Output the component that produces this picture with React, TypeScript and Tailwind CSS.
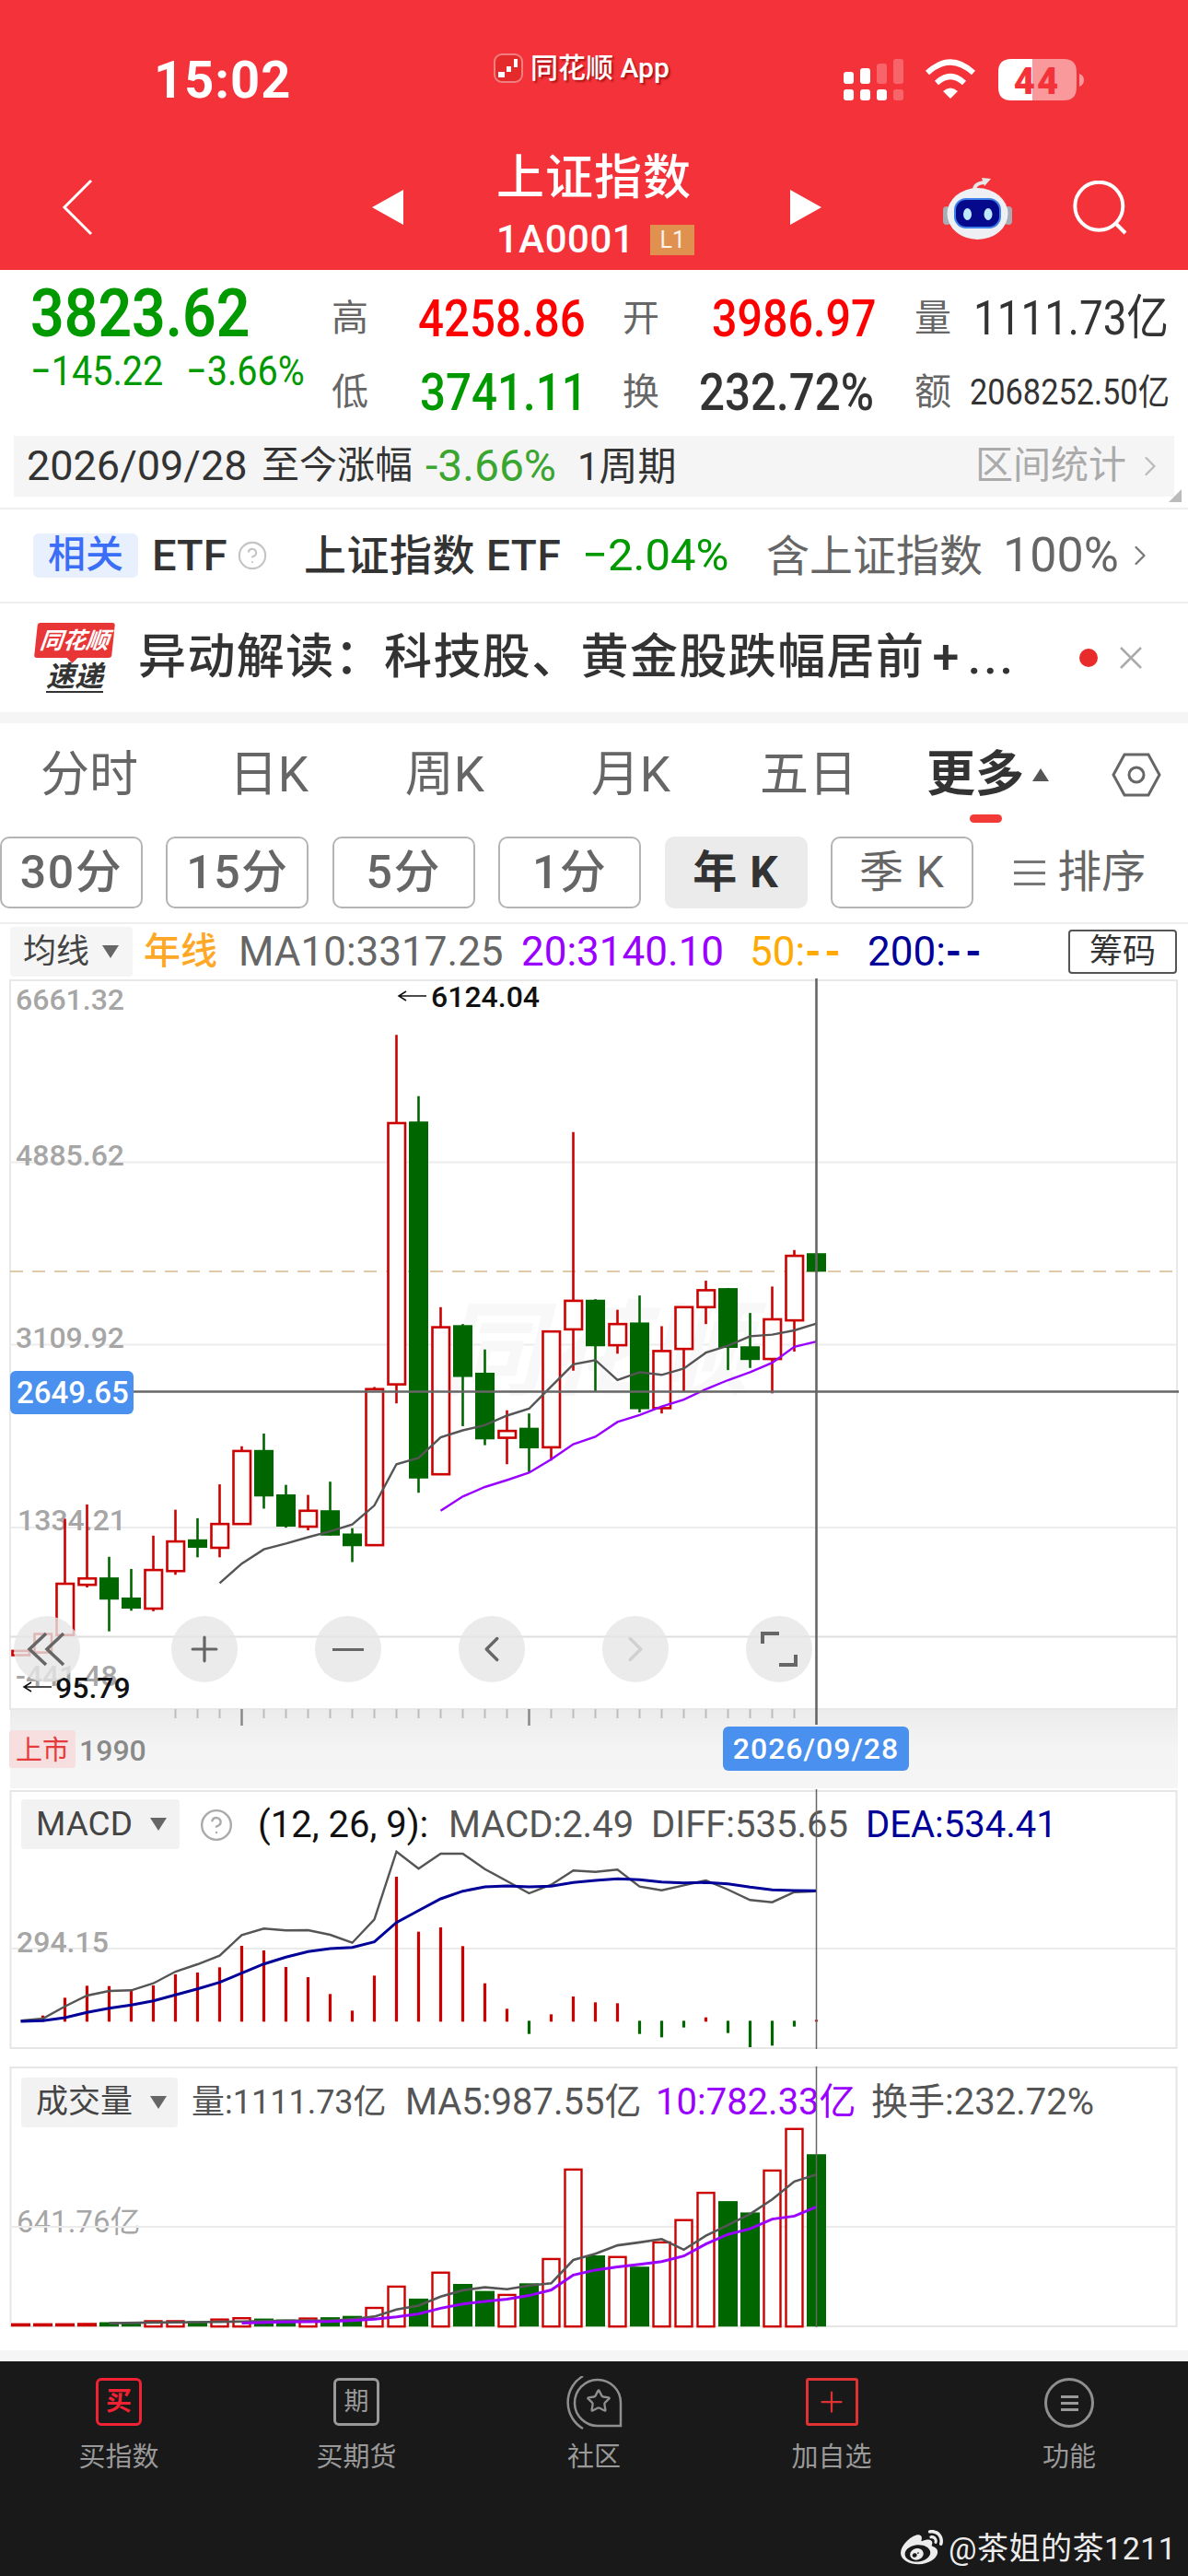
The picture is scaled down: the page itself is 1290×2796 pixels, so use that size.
import React from 'react';
import { ChevronLeft, ChevronRight, Plus, Star, CircleHelp } from 'lucide-react';
import { FaWeibo } from 'react-icons/fa';

// candle centres sit 24px apart
const cx = (i: number) => 22.5 + 24 * i;

// measured off the reference: [up, high, top, bottom, low]
type Candle = [boolean, number, number, number, number];
const candles: Candle[] = [
  [true, 1275, 1275, 1283, 1283],
  [true, 1243, 1243, 1278, 1278],
  [true, 1025, 1148, 1245, 1245],
  [true, 998, 1138, 1150, 1155],
  [false, 1097, 1136, 1178, 1238],
  [false, 1120, 1174, 1195, 1199],
  [true, 1057, 1122, 1195, 1200],
  [true, 1008, 1068, 1124, 1131],
  [false, 1024, 1064, 1080, 1098],
  [true, 960, 1035, 1080, 1098],
  [true, 888, 897, 1035, 1035],
  [false, 864, 895, 983, 1006],
  [false, 961, 979, 1040, 1042],
  [true, 980, 1010, 1040, 1047],
  [false, 955, 1009, 1057, 1057],
  [false, 1043, 1053, 1077, 1107],
  [true, 776, 780, 1075, 1075],
  [true, 110, 277, 771, 807],
  [false, 226, 274, 949, 976],
  [true, 625, 663, 941, 941],
  [false, 657, 659, 757, 850],
  [false, 705, 749, 875, 886],
  [true, 820, 859, 872, 922],
  [false, 826, 853, 892, 937],
  [true, 671, 671, 890, 915],
  [true, 294, 613, 667, 745],
  [false, 610, 611, 699, 785],
  [true, 630, 657, 697, 713],
  [false, 603, 654, 818, 824],
  [true, 661, 708, 816, 826],
  [true, 625, 625, 704, 785],
  [true, 575, 593, 625, 657],
  [false, 589, 589, 702, 744],
  [false, 636, 699, 725, 740],
  [true, 586, 648, 723, 788],
  [true, 517, 528, 650, 709],
  [false, 523, 523, 558, 558],
];
const my = (z: number) => 1060 + z / 1.742;

const maGray: [number, number][] = [
  [9, 1147], [10, 1110], [11, 1083], [12, 1072], [13, 1060], [14, 1049], [15, 1036], [16, 1000], [17, 922], [18, 910],
  [19, 871], [20, 858], [21, 848], [22, 830], [23, 817], [24, 775], [25, 733], [26, 725], [27, 763], [28, 748],
  [29, 753], [30, 741], [31, 711], [32, 698], [33, 680], [34, 677], [35, 669], [36, 656],
];
const maPurple: [number, number][] = [
  [19, 1010], [20, 983], [21, 965], [22, 952], [23, 938], [24, 913], [25, 884], [26, 870], [27, 842], [28, 829],
  [29, 813], [30, 800], [31, 780], [32, 763], [33, 748], [34, 730], [35, 700], [36, 690],
];

const diff = [817, 810, 770, 735, 720, 718, 695, 657, 633, 605, 538, 517, 523, 522, 537, 563, 487, 266, 322, 273, 273, 323, 362, 402, 374, 328, 332, 325, 380, 392, 376, 360, 390, 424, 431, 398, 395];
const dea = [819, 817, 807, 790, 776, 766, 752, 733, 713, 692, 662, 632, 610, 592, 582, 578, 560, 497, 458, 420, 395, 381, 378, 381, 379, 367, 360, 355, 358, 365, 368, 367, 371, 382, 391, 393, 394];
const macdBars = [820, 800, 742, 703, 704, 718, 702, 666, 660, 643, 573, 588, 642, 675, 730, 784, 670, 348, 527, 513, 574, 695, 778, 860, 796, 738, 757, 760, 860, 871, 839, 806, 857, 903, 898, 836, 814];
const macdY = (z: number) => 1920 + z / 3;

const volTops = [805, 805, 805, 804, 802, 802, 799, 799, 799, 794, 790, 791, 794, 791, 787, 783, 759, 695, 731, 653, 687, 708, 720, 685, 612, 343, 601, 606, 635, 562, 495, 413, 438, 472, 346, 221, 297];
const volUp = [1, 1, 1, 1, 0, 0, 1, 1, 0, 1, 1, 0, 0, 1, 0, 0, 1, 1, 0, 1, 0, 0, 1, 0, 1, 1, 0, 1, 0, 1, 1, 1, 0, 0, 1, 1, 0];
const volGray: [number, number][] = [
  [4, 805], [6, 803], [8, 802], [10, 800], [12, 797], [14, 797], [15, 793], [16, 785], [17, 764], [18, 752], [19, 725], [20, 706], [21, 697],
  [22, 703], [23, 692], [24, 685], [25, 615], [26, 596], [27, 571], [28, 562], [29, 552], [30, 584], [31, 542], [32, 510], [33, 477], [34, 433], [35, 379], [36, 358],
];
const volPurple: [number, number][] = [
  [10, 805], [12, 801], [14, 800], [15, 797], [16, 793], [17, 786], [18, 777], [19, 760], [20, 747], [21, 740], [22, 733], [23, 722], [24, 705],
  [25, 660], [26, 645], [27, 636], [28, 628], [29, 620], [30, 603], [31, 567], [32, 538], [33, 521], [34, 492], [35, 483], [36, 455],
];
const volY = (z: number) => 2230 + z / 2.77;

const line = (pts: [number, number][], toY: (z: number) => number) =>
  pts.map(([i, z]) => `${cx(i)},${toY(z).toFixed(1)}`).join(' ');

function StatusIcons() {
  return (
    <svg width="262" height="50" viewBox="916 62 262 50" className="block">
      {/* signal */}
      <g fill="#fff">
        <rect x="916" y="78" width="11" height="13" rx="3" />
        <rect x="934" y="74" width="11" height="17" rx="3" />
        <rect x="952" y="69" width="11" height="22" rx="3" opacity="0.25" />
        <rect x="970" y="64" width="11" height="27" rx="3" opacity="0.25" />
        <rect x="916" y="97" width="11" height="12" rx="3" />
        <rect x="934" y="97" width="11" height="12" rx="3" />
        <rect x="952" y="97" width="11" height="12" rx="3" />
        <rect x="970" y="97" width="11" height="12" rx="3" opacity="0.25" />
      </g>
      {/* wifi */}
      <path d="M1007 79 Q1032 56 1057 79" fill="none" stroke="#fff" strokeWidth="6" />
      <path d="M1017 90 Q1032 76 1047 90" fill="none" stroke="#fff" strokeWidth="6" />
      <path d="M1024 99 Q1032 92 1040 99 L1032 107 Z" fill="#fff" />
      {/* battery */}
      <path d="M1121 64 H1098 Q1084 64 1084 78 V95 Q1084 109 1098 109 H1121 Z" fill="#fff" />
      <path d="M1121 64 H1155 Q1169 64 1169 78 V95 Q1169 109 1155 109 H1121 Z" fill="#fff" opacity="0.5" />
      <path d="M1172 80 Q1177 82 1177 87 Q1177 92 1172 94 Z" fill="#fff" opacity="0.5" />
      <text x="1126" y="102" textAnchor="middle" fontFamily="Roboto" fontWeight="900" fontSize="40" letterSpacing="2" fill="#f43239">
        44
      </text>
    </svg>
  );
}

function Robot() {
  return (
    <svg width="76" height="70" viewBox="1024 193 76 70" className="block">
      <path d="M1058 208 Q1057 199 1069 198" fill="none" stroke="#e8e8e8" strokeWidth="4" />
      <path d="M1066 193 L1076 194 L1069 202 Z" fill="#e8e8e8" />
      <rect x="1024" y="224" width="8" height="20" rx="4" fill="#a9adb3" />
      <rect x="1091" y="224" width="8" height="20" rx="4" fill="#a9adb3" />
      <ellipse cx="1061.5" cy="232" rx="33" ry="28" fill="#eef0f3" />
      <rect x="1036" y="215" width="51" height="33" rx="13" fill="#3f7fe8" />
      <rect x="1038" y="217" width="47" height="29" rx="11" fill="#050a8c" />
      <ellipse cx="1050.5" cy="232.5" rx="4.5" ry="6.5" fill="#bfe9ff" />
      <ellipse cx="1073" cy="232.5" rx="4.5" ry="6.5" fill="#bfe9ff" />
    </svg>
  );
}

function MainChart() {
  return (
    <svg viewBox="0 1062 1290 880" className="block h-[880px] w-[1290px]">
      <defs>
        <linearGradient id="axisBand" x1="0" y1="0" x2="0" y2="1">
          <stop offset="0" stopColor="#ececec" />
          <stop offset="0.5" stopColor="#f4f4f4" />
          <stop offset="1" stopColor="#f5f5f5" />
        </linearGradient>
      </defs>
      <rect x="11" y="1855" width="1268" height="86" fill="url(#axisBand)" />
      <rect x="11" y="1064" width="1267" height="791" fill="#fff" stroke="#e8e8e8" strokeWidth="2" />
      {[1261.5, 1459.5, 1658].map((y) => (
        <line key={y} x1="11" x2="1278" y1={y} y2={y} stroke="#ececec" strokeWidth="2" />
      ))}
      <line x1="11" x2="1278" y1="1776.5" y2="1776.5" stroke="#dedede" strokeWidth="2" />
      <text x="478" y="1505" fontFamily="Roboto, 'Noto Sans CJK SC'" fontStyle="italic" fontWeight="700" fontSize="112" fill="#f8f8f8">
        同花顺
      </text>
      <line x1="11" x2="1278" y1="1380" y2="1380" stroke="#d6b98a" strokeWidth="1.5" strokeDasharray="14 10" />

      {/* axis labels */}
      <g fontFamily="Roboto" fontSize="32" fontWeight="500" fill="#a6a6a6">
        <text x="17" y="1096">6661.32</text>
        <text x="17" y="1265">4885.62</text>
        <text x="17" y="1463">3109.92</text>
        <text x="19" y="1661">1334.21</text>
        <text x="17" y="1830">-441.48</text>
      </g>

      {/* candles */}
      {candles.map(([up, high, top, bottom, low], i) => {
        const x = cx(i);
        const color = up ? '#cc0000' : '#006600';
        return (
          <g key={i}>
            <line x1={x} x2={x} y1={my(high)} y2={my(low)} stroke={color} strokeWidth="2.6" />
            {up ? (
              <rect x={x - 9} y={my(top)} width="18.5" height={Math.max(my(bottom) - my(top), 2)} fill="#fff" stroke={color} strokeWidth="2.6" />
            ) : (
              <rect x={x - 10.5} y={my(top)} width="21" height={my(bottom) - my(top)} fill={color} />
            )}
          </g>
        );
      })}
      <polyline points={line(maGray, my)} fill="none" stroke="#555" strokeWidth="2.4" />
      <polyline points={line(maPurple, my)} fill="none" stroke="#9900ff" strokeWidth="2.4" />

      {/* crosshair */}
      <line x1="11" x2="1280" y1="1510.5" y2="1510.5" stroke="#666" strokeWidth="2.4" />
      <line x1="886.5" x2="886.5" y1="1062" y2="1872" stroke="#666" strokeWidth="2.6" />

      {/* high / low callouts */}
      <g fontFamily="Roboto" fontSize="32" fontWeight="500" fill="#111">
        <text x="468" y="1093">6124.04</text>
        <text x="60" y="1843">95.79</text>
      </g>
      <path d="M463 1081 H433 M441 1076 L433 1081 L441 1086" fill="none" stroke="#111" strokeWidth="1.5" />
      <path d="M56 1831 H26 M34 1826 L26 1831 L34 1836" fill="none" stroke="#111" strokeWidth="1.5" />

      {/* price tag */}
      <rect x="11" y="1488" width="134" height="47" rx="6" fill="#4a90ee" />
      <text x="18" y="1523" fontFamily="Roboto" fontSize="33" fontWeight="500" fill="#fff">2649.65</text>

      {/* time axis */}
      {candles.map((_, i) => {
        if (i < 7 || i === 36) return null;
        const big = i === 10 || i === 23;
        return <line key={i} x1={cx(i)} x2={cx(i)} y1="1855" y2={big ? 1873 : 1865} stroke={big ? '#888' : '#bdbdbd'} strokeWidth={big ? 2.5 : 2} />;
      })}
      <rect x="10" y="1878" width="72" height="41" rx="3" fill="#f8dfdf" />
      <text x="17" y="1910" fontFamily="'Noto Sans CJK SC'" fontSize="29" fill="#e63b3b">上市</text>
      <text x="86" y="1911" fontFamily="Roboto" fontSize="32" fontWeight="500" fill="#8a8a8a">1990</text>
      <rect x="785" y="1874" width="202" height="48" rx="6" fill="#4a90ee" />
      <text x="886" y="1909" textAnchor="middle" fontFamily="Roboto" fontSize="32" fontWeight="500" fill="#fff" letterSpacing="1">2026/09/28</text>
    </svg>
  );
}

function MacdChart() {
  return (
    <svg viewBox="0 1941 1290 301" className="relative z-10 block h-[301px] w-[1290px]">
      <rect x="11.5" y="1943" width="1266" height="279" fill="none" stroke="#e6e6e6" strokeWidth="2" />
      <line x1="11" x2="1278" y1="2114" y2="2114" stroke="#ebebeb" strokeWidth="2" />
      <text x="18" y="2118" fontFamily="Roboto" fontSize="32" fontWeight="500" fill="#a6a6a6">294.15</text>
      {macdBars.map((z, i) => {
        if (i === 0) return null;
        const up = z < 820;
        const color = up ? '#cc0000' : '#006600';
        return (
          <line key={i} x1={cx(i)} x2={cx(i)} y1={macdY(up ? 820 : 817)} y2={macdY(z)} stroke={color} strokeWidth="3.2" />
        );
      })}
      <polyline points={diff.map((z, i) => `${cx(i)},${macdY(z).toFixed(1)}`).join(' ')} fill="none" stroke="#555" strokeWidth="2.4" />
      <polyline points={dea.map((z, i) => `${cx(i)},${macdY(z).toFixed(1)}`).join(' ')} fill="none" stroke="#000099" strokeWidth="3" />
      <line x1="886.5" x2="886.5" y1="1941" y2="2223" stroke="#666" strokeWidth="1.5" />
    </svg>
  );
}

function VolumeChart() {
  return (
    <svg viewBox="0 2242 1290 284" className="relative z-10 block h-[284px] w-[1290px]">
      <rect x="11.5" y="2243" width="1266" height="281" fill="none" stroke="#e6e6e6" strokeWidth="2" />
      <line x1="11" x2="1278" y1="2416" y2="2416" stroke="#ebebeb" strokeWidth="2" />
      {volTops.map((z, i) => {
        const x = cx(i);
        const top = volY(z);
        const bottom = volY(815);
        if (!volUp[i]) return <rect key={i} x={x - 10.5} y={top} width="21" height={bottom - top} fill="#006600" />;
        if (i < 4) return <rect key={i} x={x - 10.5} y={top} width="21" height={bottom - top} fill="#cc0000" />;
        return <rect key={i} x={x - 9} y={top} width="18" height={bottom - top} fill="#fff" stroke="#cc0000" strokeWidth="2.4" />;
      })}
      <polyline points={line(volGray, volY)} fill="none" stroke="#555" strokeWidth="2.6" />
      <polyline points={line(volPurple, volY)} fill="none" stroke="#9900ff" strokeWidth="3" />
      <line x1="886.5" x2="886.5" y1="2241" y2="2525" stroke="#666" strokeWidth="1.5" />
    </svg>
  );
}

const Caret = () => <span className="h-0 w-0 border-x-[9px] border-t-[14px] border-x-transparent border-t-[#666]"></span>;

const Narrow: React.FC<{ className: string; children: React.ReactNode }> = ({ className, children }) => (
  <span className={`inline-block scale-x-[0.88] whitespace-nowrap ${className}`}>{children}</span>
);

const ChartBtn: React.FC<{ children: React.ReactNode; left: string }> = ({ children, left }) => (
  <div className={`flex h-[72px] w-[72px] items-center justify-center rounded-full bg-[#e6e6e6]/80 ${left}`}>{children}</div>
);

const App: React.FC = () => {
  return (
    <div className="h-[2796px] w-[1290px] overflow-hidden bg-white [font-family:Roboto,'Noto_Sans_CJK_SC',sans-serif]">
      {/* Red header */}
      <header className="h-[293px] bg-[#f43239] text-white">
        <div className="relative flex h-[150px] items-start">
          <span className="ml-[167px] mt-[56px] w-[150px] whitespace-nowrap text-[56px] font-bold leading-[62px] tracking-[1px]">15:02</span>
          <div className="ml-[219px] mt-[58px] flex items-center">
            <span className="relative h-[32px] w-[32px] overflow-hidden rounded-[9px] border-2 border-white/40 bg-[#e42a2a]">
              <span className="absolute left-[3px] top-[18px] h-[6px] w-[7px] bg-white"></span>
              <span className="absolute left-[12px] top-[12px] h-[6px] w-[5px] bg-white"></span>
              <span className="absolute left-[20px] top-[4px] h-[9px] w-[4px] bg-white"></span>
            </span>
            <span className="ml-[8px] whitespace-nowrap text-[30px] font-medium leading-[32px] [text-shadow:2px_2px_2px_rgba(120,0,0,0.6)]">同花顺 App</span>
          </div>
          <div className="absolute left-[916px] top-[62px]">
            <StatusIcons />
          </div>
        </div>
        <div className="flex h-[143px] items-start">
          <svg width="36" height="62" viewBox="0 0 36 62" className="ml-[66px] mt-[44px] block shrink-0" fill="none" stroke="#fff" strokeWidth="3">
            <path d="M33 2 L4 31 L33 60" />
          </svg>
          <span className="ml-[302px] mt-[56px] h-0 w-0 shrink-0 border-y-[19px] border-r-[34px] border-y-transparent border-r-white"></span>
          <div className="ml-[101px] flex w-[319px] shrink-0 flex-col">
            <span className="mt-[14px] text-[52px] font-medium leading-[60px] tracking-[1px]">上证指数</span>
            <div className="mt-[16px] flex items-center">
              <span className="text-[42px] font-medium leading-[40px] tracking-[0.5px]">1A0001</span>
              <span className="ml-[17px] flex h-[33px] w-[48px] items-center justify-center bg-[#e0904f] text-[25px] leading-none text-white/90">L1</span>
            </div>
          </div>
          <span className="mt-[56px] h-0 w-0 shrink-0 border-y-[19px] border-l-[34px] border-y-transparent border-l-white"></span>
          <div className="ml-[132px] mt-[43px]">
            <Robot />
          </div>
          <svg width="64" height="64" viewBox="1162 196 64 64" className="ml-[62px] mt-[46px] block">
            <circle cx="1193.3" cy="223.7" r="26" fill="none" stroke="#fff" strokeWidth="4" />
            <line x1="1212" y1="243" x2="1222" y2="253" stroke="#fff" strokeWidth="4" />
          </svg>
        </div>
      </header>

      {/* Quote stats */}
      <section className="h-[258px]">
        <div className="flex h-[180px]">
          <div className="w-[360px] shrink-0 pl-[33px]">
            <Narrow className="mt-[7px] origin-left text-[73px] font-semibold leading-[80px] text-[#009900]">3823.62</Narrow>
            <div className="flex text-[45px] leading-[46px] text-[#009900]">
              <div className="w-[169px]"><Narrow className="origin-left">−145.22</Narrow></div>
              <div><Narrow className="origin-left">−3.66%</Narrow></div>
            </div>
          </div>
          <div className="flex flex-col pt-[23px]">
            <div className="flex h-[60px] items-center">
              <div className="flex w-[316px] items-center">
                <span className="w-[94px] shrink-0 text-[40px] text-[#666]">高</span>
                <Narrow className="origin-left text-[56px] font-medium text-[#ff0000]">4258.86</Narrow>
              </div>
              <div className="flex w-[317px] items-center">
                <span className="w-[97px] shrink-0 text-[40px] text-[#666]">开</span>
                <Narrow className="origin-left text-[55px] font-medium text-[#ff0000]">3986.97</Narrow>
              </div>
              <div className="flex w-[272px] items-center">
                <span className="w-[64px] shrink-0 text-[40px] text-[#666]">量</span>
                <Narrow className="origin-left text-[52px] text-[#333]">1111.73亿</Narrow>
              </div>
            </div>
            <div className="mt-[20px] flex h-[60px] items-center">
              <div className="flex w-[316px] items-center">
                <span className="w-[96px] shrink-0 text-[40px] text-[#666]">低</span>
                <Narrow className="origin-left text-[56px] font-medium text-[#009900]">3741.11</Narrow>
              </div>
              <div className="flex w-[317px] items-center">
                <span className="w-[83px] shrink-0 text-[40px] text-[#666]">换</span>
                <Narrow className="origin-left text-[56px] font-medium text-[#333]">232.72%</Narrow>
              </div>
              <div className="flex w-[272px] items-center">
                <span className="w-[60px] shrink-0 text-[40px] text-[#666]">额</span>
                <Narrow className="origin-left text-[39px] text-[#333]">2068252.50亿</Narrow>
              </div>
            </div>
          </div>
        </div>
        <div className="relative mx-[15px] flex h-[66px] items-center bg-[#f5f5f5] pl-[14px] text-[#333]">
          <span className="w-[255px] text-[45px]">2026/09/28</span>
          <span className="w-[178px] text-[41px]">至今涨幅</span>
          <span className="w-[165px] text-[48px] text-[#3aa52f]">-3.66%</span>
          <span className="text-[42px]">1周期</span>
          <span className="ml-auto text-[41px] text-[#aaa]">区间统计</span>
          <ChevronRight className="ml-[8px] mr-[8px] text-[#bbb]" size={36} strokeWidth={1.5} />
          <span className="absolute bottom-[-6px] right-[-8px] h-0 w-0 border-b-[14px] border-l-[14px] border-b-[#bbb] border-l-transparent"></span>
        </div>
      </section>
      <div className="h-[2px] bg-[#eeeeee]"></div>

      {/* ETF row */}
      <div className="flex h-[100px] items-center">
        <span className="ml-[36px] flex h-[48px] w-[114px] shrink-0 items-center justify-center rounded-[6px] bg-[#e8f0fe] text-[41px] font-medium text-[#3b6ef6]">相关</span>
        <span className="ml-[15px] w-[92px] shrink-0 text-[47px] font-medium text-[#333]">ETF</span>
        <CircleHelp className="shrink-0 text-[#c4c4c4]" size={34} strokeWidth={1.5} />
        <span className="ml-[39px] w-[302px] shrink-0 whitespace-nowrap text-[46px] font-medium tracking-[0.5px] text-[#333]">上证指数 ETF</span>
        <span className="w-[200px] shrink-0 text-[49px] text-[#009900]">−2.04%</span>
        <span className="w-[388px] shrink-0 whitespace-nowrap text-[47px] text-[#666]">
          含上证指数<span className="ml-[22px] text-[52px]">100%</span>
        </span>
        <ChevronRight className="shrink-0 text-[#777]" size={36} strokeWidth={1.5} />
      </div>
      <div className="h-[2px] bg-[#eeeeee]"></div>

      {/* News ticker */}
      <div className="flex h-[118px] items-center">
        <div className="relative ml-[37px] flex w-[88px] shrink-0 flex-col items-center">
          <span className="flex h-[38px] w-[84px] -skew-x-6 items-center justify-center rounded-[3px] bg-[#e83535] text-[25px] font-bold italic leading-none text-white">同花顺</span>
          <span className="absolute left-[37px] top-[33px] h-[9px] w-[9px] rotate-45 bg-[#e83535]"></span>
          <span className="mt-[6px] border-b-2 border-[#333] text-[31px] font-bold italic leading-[30px] text-[#333]">速递</span>
        </div>
        <span className="ml-[25px] w-[1022px] shrink-0 whitespace-nowrap text-[52px] font-medium tracking-[1.4px] text-[#333]">
          异动解读：科技股、黄金股跌幅居前<span className="mx-[8px]">+</span><span className="tracking-[3px]">...</span>
        </span>
        <span className="h-[20px] w-[20px] shrink-0 rounded-full bg-[#e82c2c]"></span>
        <svg width="26" height="26" viewBox="0 0 26 26" className="ml-[23px] block shrink-0">
          <path d="M2 2 L24 24 M24 2 L2 24" stroke="#aaa" strokeWidth="2.5" />
        </svg>
      </div>
      <div className="h-[12px] bg-[#f5f5f5]"></div>

      {/* Period tabs */}
      <div className="flex h-[115px] items-start pt-[26px] text-[53px] leading-[60px] text-[#666]">
        <span className="w-[194px] text-center">分时</span>
        <span className="w-[196px] text-center">日K</span>
        <span className="w-[186px] text-center">周K</span>
        <span className="w-[218px] text-center">月K</span>
        <span className="w-[168px] text-center">五日</span>
        <div className="relative ml-[44px] flex w-[201px] items-center">
          <span className="font-bold text-[#333]">更多</span>
          <span className="ml-[9px] h-0 w-0 border-x-[9px] border-b-[14px] border-x-transparent border-b-[#555]"></span>
          <span className="absolute left-[47px] top-[73px] h-[9px] w-[35px] rounded-full bg-[#f23a36]"></span>
        </div>
        <svg width="54" height="48" viewBox="0 0 54 48" className="mt-[6px] block shrink-0" fill="none" stroke="#666" strokeWidth="3">
          <path d="M14 2 H40 L52 24 L40 46 H14 L2 24 Z" />
          <circle cx="27" cy="24" r="8" />
        </svg>
      </div>
      <div className="flex h-[101px] items-start gap-[25.4px] pt-[8px]">
        {['30分', '15分', '5分', '1分'].map((label) => (
          <span key={label} className="flex h-[78px] w-[155px] items-center justify-center rounded-[10px] border-2 border-[#b4b4b4] text-[50px] font-medium tracking-[1.5px] text-[#666]">{label}</span>
        ))}
        <span className="flex h-[78px] w-[155px] items-center justify-center rounded-[10px] bg-[#ebebeb] text-[48px] font-bold tracking-[1px] text-[#333]">年 K</span>
        <span className="flex h-[78px] w-[155px] items-center justify-center rounded-[10px] border-2 border-[#b4b4b4] text-[48px] tracking-[1px] text-[#666]">季 K</span>
        <div className="ml-[19px] flex h-[78px] items-center text-[48px] text-[#666]">
          <span className="flex w-[34px] flex-col gap-[9px]">
            <span className="h-[3px] bg-[#777]"></span>
            <span className="h-[3px] bg-[#777]"></span>
            <span className="h-[3px] bg-[#777]"></span>
          </span>
          <span className="ml-[13px]">排序</span>
        </div>
      </div>
      <div className="h-[2px] bg-[#eeeeee]"></div>

      {/* Moving average legend */}
      <div className="flex h-[59px] items-center whitespace-nowrap text-[44px]">
        <div className="ml-[11px] flex h-[54px] w-[133px] items-center rounded-[4px] bg-[#f5f5f5] pl-[14px]">
          <span className="w-[86px] text-[36px] text-[#444]">均线</span>
          <Caret />
        </div>
        <span className="ml-[12px] w-[103px] text-[40px] font-medium text-[#ffa726]">年线</span>
        <span className="w-[307px] text-[#666]">MA10:3317.25</span>
        <span className="w-[248px] text-[#9900ff]">20:3140.10</span>
        <span className="w-[128px] text-[#ffaa00]">50:<span className="font-bold tracking-[4px]">--</span></span>
        <span className="w-[218px] text-[#000099]">200:<span className="font-bold tracking-[4px]">--</span></span>
        <span className="flex h-[48px] w-[118px] items-center justify-center rounded-[4px] border-2 border-[#555] text-[36px] text-[#333]">筹码</span>
      </div>

      {/* Main K line chart */}
      <section className="relative">
        <MainChart />
        <div className="absolute left-0 top-[692px]">
          <ChartBtn left="ml-[15px] absolute">
            <svg width="44" height="40" viewBox="0 0 44 40" fill="none" stroke="#666" strokeWidth="3.5">
              <path d="M21 3 L3 20 L21 37 M40 3 L22 20 L40 37" />
            </svg>
          </ChartBtn>
        </div>
        <div className="absolute left-[186px] top-[692px] flex">
          <ChartBtn left="mr-[84px]">
            <Plus className="text-[#666]" size={44} strokeWidth={1.75} />
          </ChartBtn>
          <ChartBtn left="mr-[84px]">
            <span className="h-[3px] w-[34px] bg-[#666]"></span>
          </ChartBtn>
          <ChartBtn left="mr-[84px]">
            <ChevronLeft className="text-[#666]" size={46} strokeWidth={1.75} />
          </ChartBtn>
          <ChartBtn left="mr-[84px]">
            <ChevronRight className="text-[#d0d0d0]" size={46} strokeWidth={1.75} />
          </ChartBtn>
          <ChartBtn left="">
            <svg width="40" height="40" viewBox="0 0 40 40" fill="none" stroke="#666" strokeWidth="4">
              <path d="M2 14 V3 H20 M38 26 V37 H20" />
            </svg>
          </ChartBtn>
        </div>
      </section>

      {/* MACD */}
      <section className="relative">
        <MacdChart />
        <div className="absolute left-[23px] top-[11px] flex h-[54px] w-[172px] items-center rounded-[4px] bg-[#f2f2f2] pl-[16px]">
          <span className="w-[124px] text-[37px] text-[#444]">MACD</span>
          <Caret />
        </div>
        <div className="absolute left-[216px] top-[18px] flex h-[42px] items-center whitespace-nowrap text-[40px] text-[#555]">
          <CircleHelp className="shrink-0 text-[#aaa]" size={38} strokeWidth={1.5} />
          <span className="ml-[26px] w-[207px] text-[#111]">(12, 26, 9):</span>
          <span className="w-[220px]">MACD:2.49</span>
          <span className="w-[233px]">DIFF:535.65</span>
          <span className="text-[#000099]">DEA:534.41</span>
        </div>
      </section>

      {/* Volume */}
      <section className="relative">
        <VolumeChart />
        <div className="absolute left-[23px] top-[12px] flex h-[54px] w-[170px] items-center rounded-[4px] bg-[#f2f2f2] pl-[16px]">
          <span className="w-[124px] text-[35px] text-[#444]">成交量</span>
          <Caret />
        </div>
        <div className="absolute left-[208px] top-[18px] flex h-[42px] items-center whitespace-nowrap text-[40px] text-[#555]">
          <span className="w-[232px] text-[36px]">量:1111.73亿</span>
          <span className="w-[272px]">MA5:987.55亿</span>
          <span className="w-[234px] text-[#9900ff]">10:782.33亿</span>
          <span>换手:232.72%</span>
        </div>
        <span className="absolute left-[18px] top-[144px] text-[33px] text-[#a6a6a6]">641.76亿</span>
      </section>

      <div className="h-[24px] bg-white"></div>
      <div className="h-[12px] bg-[#f5f5f5]"></div>

      {/* Bottom bar */}
      <nav className="relative grid h-[234px] grid-cols-5 bg-[#191919] pt-[18px] text-[29px] leading-[36px] text-[#999]">
        <div className="flex flex-col items-center">
          <span className="flex h-[52px] w-[50px] items-center justify-center rounded-[6px] border-[3px] border-[#f02233] text-[28px] font-bold leading-none text-[#f02233]">买</span>
          <span className="mt-[16px]">买指数</span>
        </div>
        <div className="flex flex-col items-center">
          <span className="flex h-[52px] w-[50px] items-center justify-center rounded-[6px] border-[3px] border-[#999] text-[27px] leading-none">期</span>
          <span className="mt-[16px]">买期货</span>
        </div>
        <div className="flex flex-col items-center">
          <div className="relative h-[52px] w-[62px]">
            <svg width="62" height="60" viewBox="614 2578 62 60" className="absolute top-[-2px] block" fill="none" stroke="#8f8f8f" strokeWidth="2.5">
              <path d="M674 2632 H650 A25 25 0 1 1 674 2607 Z" />
              <path d="M633 2578 A33 33 0 0 0 633 2635" />
            </svg>
            <Star className="absolute left-[22px] top-[11px] text-[#8f8f8f]" size={28} strokeWidth={2} />
          </div>
          <span className="mt-[16px]">社区</span>
        </div>
        <div className="flex flex-col items-center">
          <span className="flex h-[52px] w-[57px] items-center justify-center rounded-[3px] border-[3px] border-[#e03232]">
            <Plus className="text-[#e03232]" size={36} strokeWidth={1.5} />
          </span>
          <span className="mt-[16px]">加自选</span>
        </div>
        <div className="flex flex-col items-center">
          <span className="flex h-[54px] w-[54px] flex-col items-center justify-center gap-[4px] rounded-full border-[3px] border-[#8f8f8f]">
            <span className="h-[3px] w-[19px] bg-[#999]"></span>
            <span className="h-[3px] w-[19px] bg-[#999]"></span>
            <span className="h-[3px] w-[19px] bg-[#999]"></span>
          </span>
          <span className="mt-[14px]">功能</span>
        </div>
        <div className="absolute bottom-[8px] left-[978px] flex items-center text-[#ececec]">
          <FaWeibo size={46} />
          <span className="ml-[6px] whitespace-nowrap text-[34px] leading-[44px] tracking-[0.5px]">@茶姐的茶1211</span>
        </div>
      </nav>
    </div>
  );
};

export default App;
